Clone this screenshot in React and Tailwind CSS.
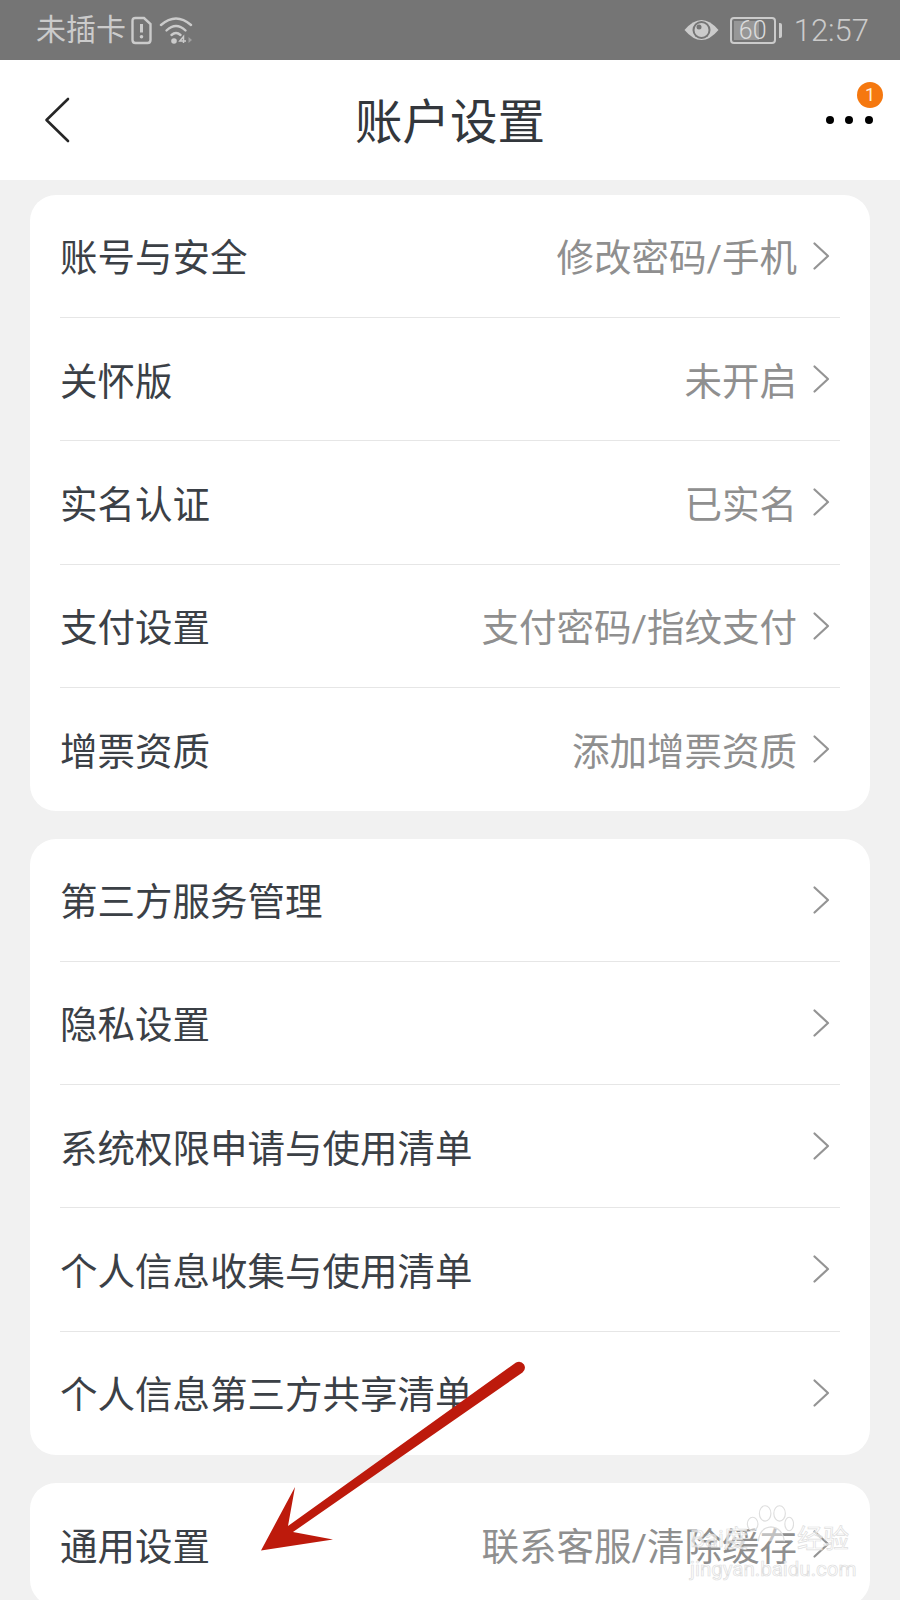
const sans = "font-['Roboto','Noto_Sans_CJK_SC',sans-serif]";

function Chevron() {
  return (
    <svg width="18" height="30" viewBox="0 0 18 30" fill="none" className="shrink-0">
      <path d="M2.5 2.5 L16 15 L2.5 27.5" stroke="#949494" strokeWidth="2.2" strokeLinecap="round" strokeLinejoin="round" />
    </svg>
  );
}

function Row({ title, value, last }) {
  return (
    <div className={`flex h-[123.2px] items-center mx-[30px] ${last ? "" : "border-b border-[#e6e6e6]"}`}>
      <span className="pt-[6px] text-[37.5px] leading-none text-[#3b4046]">{title}</span>
      {value ? <span className="ml-auto pt-[6px] text-[37.5px] leading-none text-[#8f8f8f]">{value}</span> : <span className="ml-auto" />}
      <span className="ml-[15px] mr-[10px] flex">
        <Chevron />
      </span>
    </div>
  );
}

function Card({ rows }) {
  return (
    <div className="mx-[30px] rounded-[26px] bg-white">
      {rows.map((r, i) => (
        <Row key={r[0]} title={r[0]} value={r[1]} last={i === rows.length - 1} />
      ))}
    </div>
  );
}

function StatusBar() {
  return (
    <div className="flex h-[60px] items-center bg-[#757575] pl-[36px] pr-[31px] text-[#cbcbcb]">
      <span className="text-[30px] leading-none">未插卡</span>
      <svg width="24" height="29" viewBox="0 0 24 29" fill="none" className="ml-[3px]">
        <path d="M3.5 5 Q3.5 2 6.5 2 H15 L21.5 8 V24 Q21.5 27 18.5 27 H6.5 Q3.5 27 3.5 24 Z" stroke="#cbcbcb" strokeWidth="2.4" />
        <path d="M12.5 8 V16.5" stroke="#cbcbcb" strokeWidth="3" />
        <circle cx="12.5" cy="20.8" r="1.8" fill="#cbcbcb" />
      </svg>
      <svg width="36" height="30" viewBox="0 0 36 30" fill="none" className="ml-[6px]">
        <path d="M2 10 Q17 -3 32 10" stroke="#cbcbcb" strokeWidth="2.4" strokeLinecap="round" />
        <path d="M7.5 15.5 Q17 6.5 26.5 15.5" stroke="#cbcbcb" strokeWidth="2.4" strokeLinecap="round" />
        <path d="M12.5 20 Q17 16 21.5 20" stroke="#cbcbcb" strokeWidth="2.4" strokeLinecap="round" />
        <circle cx="15" cy="26" r="2.8" fill="#cbcbcb" />
        <path d="M24.5 28 V21.5 L20.8 26 H27" stroke="#cbcbcb" strokeWidth="1.5" />
        <path d="M29.5 22 L33 25 L29.5 28 Z" fill="#a0a0a0" />
      </svg>
      <svg width="35" height="24" viewBox="0 0 35 24" className="ml-auto">
        <path d="M0.5 12 Q17.5 -8 34.5 12 Q17.5 32 0.5 12 Z" fill="#cbcbcb" />
        <circle cx="17.5" cy="12" r="9" fill="#757575" />
        <circle cx="17.5" cy="12" r="7" fill="#cbcbcb" />
        <circle cx="15" cy="9" r="2.5" fill="#757575" />
      </svg>
      <div className="relative ml-[11px] flex h-[27px] w-[46px] items-center justify-center overflow-hidden rounded-[4px] border-[2px] border-[#cbcbcb]">
        <span className="absolute left-[2px] top-[2px] bottom-[2px] w-[60%] bg-[#979797]" />
        <span className="relative text-[25px] leading-none text-[#dcdcdc] font-light">60</span>
      </div>
      <span className="ml-[3px] h-[15px] w-[3px] rounded-r-[2px] bg-[#cbcbcb]" />
      <span className="ml-[12px] text-[31px] leading-none font-light">12:57</span>
    </div>
  );
}

function Header() {
  return (
    <div className="relative flex h-[120px] items-center justify-center bg-white">
      <svg width="28" height="48" viewBox="0 0 28 48" fill="none" className="absolute left-[44px] top-[36px]">
        <path d="M24 3 L2.5 24 L24 45" stroke="#262626" strokeWidth="2.6" strokeLinecap="round" strokeLinejoin="round" />
      </svg>
      <span className="pt-[8px] text-[47.5px] leading-none text-[#33373c]">账户设置</span>
      <div className="absolute left-[826px] top-[56px] flex gap-[11.3px]">
        <span className="h-[8px] w-[8px] rounded-full bg-black" />
        <span className="h-[8px] w-[8px] rounded-full bg-black" />
        <span className="h-[8px] w-[8px] rounded-full bg-black" />
      </div>
      <div className="absolute left-[857px] top-[22px] flex h-[26px] w-[26px] items-center justify-center rounded-full bg-[#f5780f] text-[18px] leading-none text-[#ffeeda]">
        1
      </div>
    </div>
  );
}

function Arrow() {
  return (
    <svg width="900" height="1600" viewBox="0 0 900 1600" className="pointer-events-none absolute left-0 top-0">
      <path d="M516 1362.5 Q521 1360.5 524 1364.5 Q526.5 1369 522.5 1372.5 L293 1532 L333 1539.5 L261 1550.5 L295 1487 L288 1526 Z" fill="#bd1a0c" />
    </svg>
  );
}

function Watermark() {
  return (
    <div className="pointer-events-none absolute left-[688px] top-[1500px] h-[84px] w-[166px] text-white/60 [-webkit-text-stroke:0.7px_#dedede]">
      <svg width="50" height="42" viewBox="0 0 52 40" fill="rgba(255,255,255,0.45)" stroke="#dedede" strokeWidth="1.2" className="absolute left-[56px] top-[3px]">
        <ellipse cx="22" cy="9" rx="6" ry="8" />
        <ellipse cx="37" cy="9" rx="6" ry="8" />
        <ellipse cx="9" cy="20" rx="5.5" ry="7" />
        <ellipse cx="47" cy="20" rx="4.5" ry="7" />
        <path d="M15 38 Q16 24 28 23 Q40 24 42 38" />
      </svg>
      <span className="absolute left-[2px] top-[27px] text-[24px] leading-none">Bai度</span>
      <span className="absolute left-[109px] top-[26px] text-[26px] leading-none">经验</span>
      <span className="absolute left-[2px] top-[59px] text-[20.5px] leading-none">jingyan.baidu.com</span>
    </div>
  );
}

export default function App() {
  return (
    <div className={`relative h-[1600px] w-[900px] overflow-hidden bg-[#f1f1f1] ${sans}`}>
      <StatusBar />
      <Header />
      <div className="flex flex-col gap-[27.9px] pt-[15px]">
        <Card
          rows={[
            ["账号与安全", "修改密码/手机"],
            ["关怀版", "未开启"],
            ["实名认证", "已实名"],
            ["支付设置", "支付密码/指纹支付"],
            ["增票资质", "添加增票资质"],
          ]}
        />
        <Card
          rows={[
            ["第三方服务管理"],
            ["隐私设置"],
            ["系统权限申请与使用清单"],
            ["个人信息收集与使用清单"],
            ["个人信息第三方共享清单"],
          ]}
        />
        <Card rows={[["通用设置", "联系客服/清除缓存"]]} />
      </div>
      <Arrow />
      <Watermark />
    </div>
  );
}
